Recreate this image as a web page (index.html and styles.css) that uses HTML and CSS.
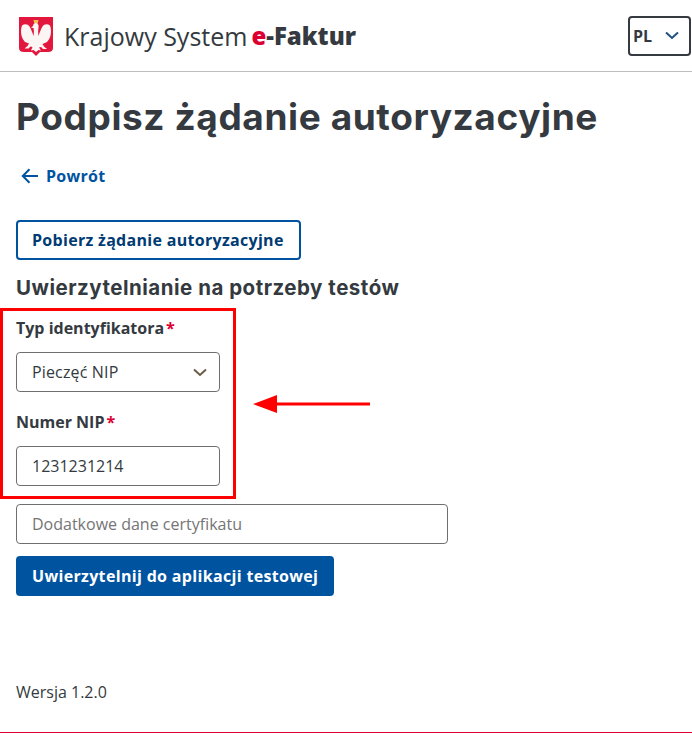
FILE: index.html
```html
<!DOCTYPE html>
<html lang="pl">
<head>
    <meta charset="UTF-8">
    <meta name="viewport" content="width=device-width, initial-scale=1.0">
    <title>Krajowy System e-Faktur</title>
    <link rel="stylesheet" href="styles.css">
</head>
<body>
    <header class="topbar">
        <div class="brand">
            <svg class="emblem" width="34" height="40" viewBox="0 0 34 40">
                <path d="M0 0H34V31Q34 35 29 35H21L17 39L13 35H5Q0 35 0 31Z" fill="#e3173e"/>
                <path d="M14.500 3h5l-.8 3.500h-3.400z" fill="#f2c14e"/>
                <path d="M17 6c-2 0-3 1.500-3 3l-2 1.500 2.500.5c.5 2 .5 5 0 8-1-3-2.500-7-4-9.500C9 7 5.500 6.500 3 8.500 1 14 2 21 6 25l4 1.500-1.500 2.500-3 2.500h4l2-2 2 .5-1.500 3.500 2.500-.5 2.500 2 2.500-2 2.500.5L20 30.500l2-.5 2 2h4l-3-2.500-1.500-2.500L28 25c4-4 5-11 3-16.500-2.500-2-6-1.500-7.500 1-1.500 2.500-3 6.500-4 9.500-.5-3-.5-6 0-8.500.5-2-.5-4.500-2.500-4.500z" fill="#fbf6f4"/>
            </svg>
            <span class="brand-name">Krajowy System</span>
            <span class="brand-strong"><span class="brand-e">e</span>-Faktur</span>
        </div>
        <button class="lang">PL
            <svg width="14" height="9" viewBox="0 0 14 9"><path d="M1 1.500L7 7L13 1.500" fill="none" stroke="#1d4f80" stroke-width="2"/></svg>
        </button>
    </header>

    <main class="content">
        <h1>Podpisz żądanie autoryzacyjne</h1>

        <a class="back" href="#">
            <svg width="18" height="16" viewBox="0 0 18 16"><path d="M17 8H2M8.500 1.200L1.800 8l6.700 6.800" fill="none" stroke="#00539f" stroke-width="2"/></svg>
            Powrót
        </a>

        <button class="btn-outline">Pobierz żądanie autoryzacyjne</button>

        <h2>Uwierzytelnianie na potrzeby testów</h2>

        <div class="field">
            <label>Typ identyfikatora<span class="req">*</span></label>
            <div class="input select">Pieczęć NIP
                <svg width="14" height="9" viewBox="0 0 14 9"><path d="M1 1.500L7 7L13 1.500" fill="none" stroke="#6b5a45" stroke-width="2"/></svg>
            </div>
        </div>
        <div class="field field-nip">
            <label>Numer NIP<span class="req">*</span></label>
            <div class="input value">1231231214</div>
        </div>

        <div class="input wide placeholder">Dodatkowe dane certyfikatu</div>

        <button class="btn-primary">Uwierzytelnij do aplikacji testowej</button>

        <p class="version">Wersja 1.2.0</p>
    </main>

    <div class="footer-line"></div>

    <!-- annotation drawn over the page -->
    <div class="mark-box"></div>
    <svg class="mark-arrow" width="120" height="18" viewBox="0 0 120 18">
        <path d="M117 9H20" stroke="#ff0000" stroke-width="3"/>
        <path d="M0 9L24 0V18Z" fill="#ff0000"/>
    </svg>
</body>
</html>
```

FILE: styles.css
```css
* {
    box-sizing: border-box;
}

body {
    margin: 0;
    height: 733px;
    position: relative;
    overflow: hidden;
    background: #fff;
    color: #343a40;
    font-family: "Open Sans", "Liberation Sans", sans-serif;
    font-size: 16px;
}

.topbar {
    height: 72px;
    display: flex;
    align-items: center;
    justify-content: space-between;
    padding: 0 1px 0 19px;
    border-bottom: 1px solid #bdbdbd;
}

.brand {
    display: flex;
    align-items: center;
}

.emblem {
    margin-right: 11px;
    margin-top: 3px;
}

.brand-name {
    font-size: 25px;
    margin-right: 4px;
}

.brand-strong {
    font-size: 24px;
    font-weight: 800;
}

.brand-e {
    color: #dc0032;
}

.lang {
    width: 63px;
    height: 40px;
    display: flex;
    align-items: center;
    justify-content: space-between;
    padding: 0 10px 0 3px;
    background: #fff;
    border: 2px solid #343a40;
    border-radius: 4px;
    color: #343a40;
    font-family: inherit;
    font-size: 16px;
    font-weight: 700;
}

.content {
    padding: 0 16px;
}

h1 {
    margin: 21px 0 0;
    font-family: Inter, "Liberation Sans", sans-serif;
    font-size: 37px;
    line-height: 48px;
    font-weight: 700;
    letter-spacing: 0.6px;
}

.back {
    display: flex;
    align-items: center;
    gap: 7px;
    height: 24px;
    margin: 23px 0 0 5px;
    color: #00539f;
    font-weight: 700;
    letter-spacing: 0.3px;
    text-decoration: none;
}

.btn-outline {
    display: block;
    height: 40px;
    margin-top: 32px;
    padding: 0 15px 0 14px;
    background: #fff;
    border: 2px solid #00539f;
    border-radius: 4px;
    color: #003b73;
    font-family: inherit;
    font-size: 16px;
    font-weight: 700;
    letter-spacing: 0.3px;
}

h2 {
    margin: 13px 0 0;
    font-family: Inter, "Liberation Sans", sans-serif;
    font-size: 20.500px;
    line-height: 30px;
    font-weight: 700;
    letter-spacing: 0.5px;
}

.field {
    margin-top: 13px;
    width: 204px;
}

.field-nip {
    margin-top: 18px;
}

label {
    display: block;
    height: 24px;
    line-height: 24px;
    margin-bottom: 12px;
    font-weight: 700;
}

.req {
    color: #dc0032;
    margin-left: 2px;
}

.input {
    height: 40px;
    display: flex;
    align-items: center;
    padding: 0 15px;
    border: 1px solid #6f6f6f;
    border-radius: 4px;
    background: #fff;
}

.select {
    justify-content: space-between;
    padding-right: 12px;
    letter-spacing: 0.15px;
}

.value {
    color: #343a40;
}

.wide {
    width: 432px;
    margin-top: 18px;
}

.placeholder {
    color: #757575;
}

.btn-primary {
    display: block;
    height: 40px;
    margin-top: 12px;
    padding: 0 16px;
    background: #00539f;
    border: 0;
    border-radius: 4px;
    color: #fff;
    font-family: inherit;
    font-size: 16px;
    font-weight: 700;
    letter-spacing: 0.33px;
}

.version {
    margin: 84px 0 0;
    line-height: 24px;
}

.footer-line {
    position: absolute;
    left: 0;
    right: 0;
    bottom: 0;
    height: 1px;
    background: #dc0032;
}

.mark-box {
    position: absolute;
    left: 0;
    top: 308px;
    width: 236px;
    height: 191px;
    border: 3px solid #ff0000;
}

.mark-arrow {
    position: absolute;
    left: 253px;
    top: 395px;
}
```
